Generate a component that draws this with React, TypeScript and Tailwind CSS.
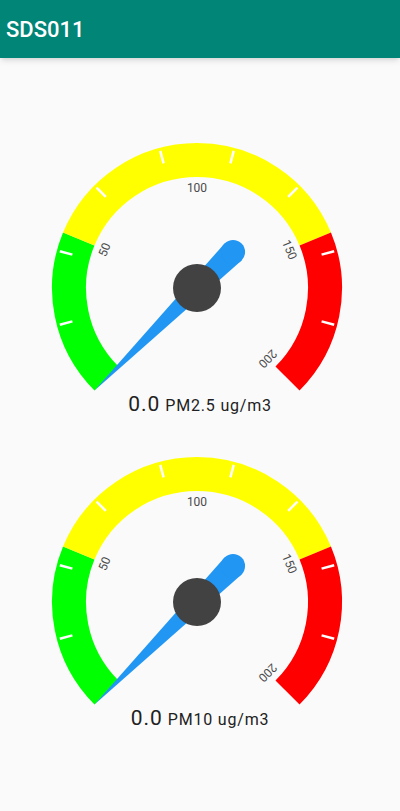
import React from 'react';

const CX = 147;
const CY = 148;
const R_MID = 128;
const R_OUT = 145;

// value 0..200 -> screen angle in degrees (clockwise from +x)
const angleOf = (v: number) => 135 + (270 * v) / 200;
const rad = (deg: number) => (deg * Math.PI) / 180;
const pt = (r: number, deg: number) => [CX + r * Math.cos(rad(deg)), CY + r * Math.sin(rad(deg))];

function arcPath(r: number, a0: number, a1: number) {
  const [x0, y0] = pt(r, a0);
  const [x1, y1] = pt(r, a1);
  const large = a1 - a0 > 180 ? 1 : 0;
  return `M ${x0} ${y0} A ${r} ${r} 0 ${large} 1 ${x1} ${y1}`;
}

const bands = [
  { from: 0, to: 50, color: '#00ff00' },
  { from: 50, to: 150, color: '#ffff00' },
  { from: 150, to: 200, color: '#ff0000' },
];

const labels = [50, 100, 150, 200];

function Gauge({ value, unit }: { value: number; unit: string }) {
  const needleAngle = angleOf(value);
  const d = [Math.cos(rad(needleAngle)), Math.sin(rad(needleAngle))];
  const p = [-d[1], d[0]];
  const tip = [CX + R_OUT * d[0], CY + R_OUT * d[1]];
  const tail = [CX - 51 * d[0], CY - 51 * d[1]];
  const w = 12;
  const needle = `${tip[0]},${tip[1]} ${tail[0] + w * p[0]},${tail[1] + w * p[1]} ${tail[0] - w * p[0]},${tail[1] - w * p[1]}`;

  return (
    <div className="flex flex-col items-center">
      <svg width={300} height={252} viewBox="0 0 300 252">
        {bands.map((b) => (
          <path
            key={b.from}
            d={arcPath(R_MID, angleOf(b.from), angleOf(b.to))}
            fill="none"
            stroke={b.color}
            strokeWidth={34}
          />
        ))}
        {[1, 2, 3, 4, 5, 6, 7, 8].map((k) => {
          const a = 135 + 30 * k;
          const [x0, y0] = pt(142, a);
          const [x1, y1] = pt(129, a);
          return <line key={k} x1={x0} y1={y0} x2={x1} y2={y1} stroke="#ffffff" strokeWidth={2.5} />;
        })}
        {labels.map((v) => {
          const a = angleOf(v);
          const [x, y] = pt(100, a);
          return (
            <text
              key={v}
              x={x}
              y={y}
              fontSize={12}
              fill="#4a4a4a"
              textAnchor="middle"
              dominantBaseline="central"
              fontFamily="Roboto, 'Noto Sans', sans-serif"
              transform={`rotate(${a + 90} ${x} ${y})`}
            >
              {v}
            </text>
          );
        })}
        <polygon points={needle} fill="#2196f3" />
        <circle cx={tail[0]} cy={tail[1]} r={w} fill="#2196f3" />
        <circle cx={CX} cy={CY} r={24} fill="#424242" />
      </svg>
      <div className="flex h-[24px] items-baseline justify-center gap-[5px] leading-[24px] text-[#212121] font-['Roboto',sans-serif]">
        <span className="text-[21px] tracking-[1px]">{value.toFixed(1)}</span>
        <span className="text-[16px] tracking-[0.8px]">{unit}</span>
      </div>
    </div>
  );
}

export default function App() {
  return (
    <div className="min-h-[811px] w-[400px] bg-[#fafafa] font-['Roboto',sans-serif]">
      <header className="flex h-[58px] items-center bg-[#008577] px-[6px] shadow-md">
        <h1 className="text-[22px] font-medium text-white">SDS011</h1>
      </header>
      <main className="flex flex-col items-center gap-[38px] pt-[82px]">
        <Gauge value={0} unit="PM2.5 ug/m3" />
        <Gauge value={0} unit="PM10 ug/m3" />
      </main>
    </div>
  );
}
